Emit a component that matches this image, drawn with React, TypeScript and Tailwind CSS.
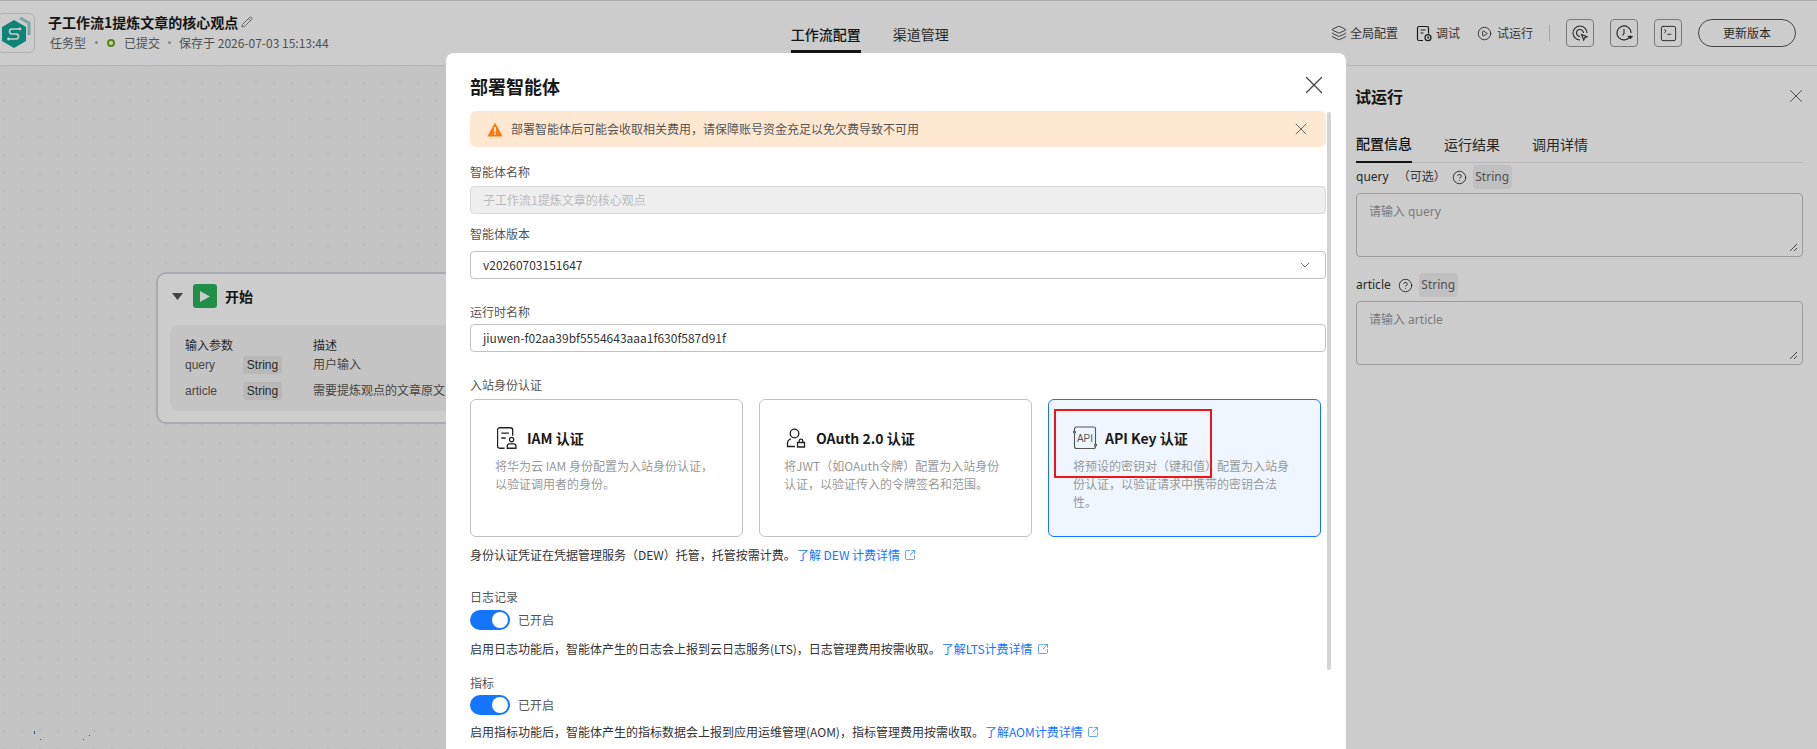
import { CirclePlay, CircleHelp, Layers, Pencil, SquareArrowOutUpRight, SquareTerminal, X, ChevronDown } from 'lucide-react';

const fontStack = 'font-["Noto_Sans_CJK_SC","Noto_Sans",sans-serif]';

function Logo() {
  return (
    <svg width="30" height="32" viewBox="0 0 30 32" fill="none">
      <path d="M19 1l9 5v12" stroke="#7fc4c0" strokeWidth="3" opacity="0.8" />
      <path d="M13 3l12 7v14l-12 7-12-7V10z" fill="#12a594" />
      <path d="M18 12h-7a2.5 2.5 0 0 0 0 5h4a2.5 2.5 0 0 1 0 5H8" stroke="#fff" strokeWidth="1.6" />
      <circle cx="19" cy="12" r="1.4" fill="#fff" />
      <circle cx="7.5" cy="22" r="1.4" fill="#fff" />
    </svg>
  );
}

function DebugIcon() {
  return (
    <svg width="16" height="17" viewBox="0 0 16 16" fill="none" stroke="#222" strokeWidth="1.2">
      <path d="M7 15H3a1.5 1.5 0 0 1-1.5-1.5v-11A1.5 1.5 0 0 1 3 1h8a1.5 1.5 0 0 1 1.5 1.5V8" />
      <path d="M4.5 4.5h5M4.5 7.5h3" />
      <circle cx="12" cy="12.2" r="3" />
      <path d="M12 10.7v1.6h1.3" />
    </svg>
  );
}

function TraceIcon() {
  return (
    <svg width="18" height="18" viewBox="0 0 18 18" fill="none" stroke="#333" strokeWidth="1.1">
      <path d="M9 16a7 7 0 1 1 7-7" />
      <path d="M9 12.5A3.5 3.5 0 1 1 12.5 9" />
      <path d="M10.5 10.5l5.5 2.2-2.3 1-1 2.3z" />
    </svg>
  );
}

function HistoryIcon() {
  return (
    <svg width="18" height="18" viewBox="0 0 18 18" fill="none" stroke="#333" strokeWidth="1.1">
      <path d="M15.5 11.5A7 7 0 1 1 16 9" />
      <path d="M9 5v4.5l-1.5 2" />
      <path d="M13.5 12.5h3.5l-1.7 2z" fill="#333" />
    </svg>
  );
}

function IamIcon() {
  return (
    <svg width="20" height="22" viewBox="1 1 18.5 20" fill="none" stroke="#222" strokeWidth="1.2">
      <path d="M8 20.5H3.5A2 2 0 0 1 1.5 18.5V3.5a2 2 0 0 1 2-2h10a2 2 0 0 1 2 2V9" />
      <path d="M5 6.5h7M5 11h4" />
      <circle cx="14.5" cy="12.5" r="2" />
      <path d="M10.5 20.5v-2a2 2 0 0 1 2-2h4a2 2 0 0 1 2 2v2z" />
    </svg>
  );
}

function OauthIcon() {
  return (
    <svg width="20" height="20" viewBox="0 0 20 20" fill="none" stroke="#222" strokeWidth="1.3">
      <circle cx="8.5" cy="5.5" r="4.3" />
      <path d="M9 18.5H1.5V15a4.5 4.5 0 0 1 3.5-4.2M12 10.2" />
      <path d="M11.5 14.5h7v4.5h-7z" />
      <path d="M13.2 14.5V13a1.8 1.8 0 0 1 3.6 0v1.5" />
    </svg>
  );
}

function ApiIcon() {
  return (
    <svg width="24" height="24" viewBox="0 0 24 24" fill="none" stroke="#555" strokeWidth="1.1">
      <path d="M1.5 5V3a2 2 0 0 1 2-2h17a2 2 0 0 1 2 2v15M22.5 20v.5a2 2 0 0 1-2 2h-17a2 2 0 0 1-2-2V7" />
      <circle cx="1.5" cy="6" r="1" />
      <circle cx="22.5" cy="19" r="1" />
      <text x="12" y="15.5" textAnchor="middle" fontSize="10" stroke="none" fill="#555" fontFamily="Liberation Sans">API</text>
    </svg>
  );
}

function InputParamRow({ name, desc, mt }: { name: string; desc: string; mt: string }) {
  return (
    <div className={`flex items-center ${mt}`}>
      <span className="w-[58px] text-[#555]">{name}</span>
      <span className="inline-flex h-[18px] w-[39px] items-center justify-center rounded-[3px] bg-[#e7e7e7] text-[#333]">String</span>
      <span className="ml-[31px] whitespace-nowrap text-[#555]">{desc}</span>
    </div>
  );
}

function TrialField({ label, placeholder, mt, optional }: { label: string; placeholder: string; mt: string; optional?: boolean }) {
  return (
    <div className={`${mt} font-["Noto_Sans","Noto_Sans_CJK_SC",sans-serif]`}>
      <div className="flex items-center h-6 text-[12px] text-[#333]">
        <span>{label}</span>
        {optional && <span className="ml-[9px] text-[#444]">（可选）</span>}
        <CircleHelp size={15} strokeWidth={1.3} className={optional ? 'ml-[6px] text-[#222]' : 'ml-[7px] text-[#222]'} />
        <span className="ml-[6px] inline-flex h-6 w-[39px] items-center justify-center rounded-[4px] bg-[#f0f0f0] text-[#666]">String</span>
      </div>
      <div className="relative mt-[4px] h-16 rounded-[4px] border border-[#c2c2c2] px-3 py-[8px] text-[12px] leading-[20px] text-[#999]">
        {placeholder}
        <svg className="absolute right-[4px] bottom-[4px]" width="9" height="9" viewBox="0 0 9 9" stroke="#555" strokeWidth="1">
          <path d="M1 8l7-7M5 8l3-3" />
        </svg>
      </div>
    </div>
  );
}

function AuthCard({ icon, title, desc, selected }: { icon: React.ReactNode; title: string; desc: string; selected?: boolean }) {
  return (
    <div className={`h-[138px] rounded-[6px] border px-6 pt-[26px] ${selected ? 'border-[#1476ff] bg-[#eff6ff]' : 'border-[#c2c2c2] bg-white'}`}>
      <div className="flex items-center h-6 gap-[8px]">
        <span className="flex w-6 items-center justify-center">{icon}</span>
        <span className="text-[14px] font-semibold text-[#191919]">{title}</span>
      </div>
      <p className="mt-[7px] text-[12px] leading-[18px] text-[#999]">{desc}</p>
    </div>
  );
}

function Toggle() {
  return (
    <div className="flex items-center gap-2 h-5">
      <span className="flex h-5 w-10 items-center justify-end rounded-full bg-[#1476ff] px-[2px]">
        <span className="h-4 w-4 rounded-full bg-white" />
      </span>
      <span className="text-[12px] text-[#555]">已开启</span>
    </div>
  );
}

function DocLink({ children }: { children: React.ReactNode }) {
  return (
    <span className="ml-[1px] inline-flex items-center text-[#1476ff]">
      {children}
      <SquareArrowOutUpRight size={12} strokeWidth={1.3} className="ml-[4px]" />
    </span>
  );
}

function DeployDialog() {
  return (
    <div className="relative ml-[446px] mt-[53px] h-[696px] w-[900px] overflow-hidden rounded-t-[8px] bg-white pl-6 pr-5">
      <div className="flex h-[58px] items-center justify-between text-[18px] font-semibold text-[#191919]">
        <span className="mt-[9px]">部署智能体</span>
        <X size={30} strokeWidth={0.95} className="mt-[6px] mr-[-3px] text-[#444]" />
      </div>
      <div className="flex h-9 items-center rounded-[6px] bg-[#ffe8d1] pl-[17px] pr-[15px] text-[12px] text-[#555]">
        <svg width="16" height="15" viewBox="0 0 16 15">
          <path d="M8 .5L15.7 14.5H.3z" fill="#fa7a14" />
          <path d="M7.2 5h1.6v5.2H7.2zM7.2 11h1.6v1.6H7.2z" fill="#fff" />
        </svg>
        <span className="ml-[8px] flex-1">部署智能体后可能会收取相关费用，请保障账号资金充足以免欠费导致不可用</span>
        <X size={20} strokeWidth={1.1} className="text-[#555]" />
      </div>

      <div className="mt-[16px] text-[12px] leading-[18px] text-[#555]">智能体名称</div>
      <div className="mt-[5px] flex h-7 items-center rounded-[4px] border border-[#d9d9d9] bg-[#eeeeee] px-3 text-[12px] text-[#bbb]">子工作流1提炼文章的核心观点</div>

      <div className="mt-[11px] text-[12px] leading-[18px] text-[#555]">智能体版本</div>
      <div className="mt-[8px] flex h-7 items-center justify-between rounded-[4px] border border-[#c2c2c2] px-3 text-[12px] text-[#333]">
        <span>v20260703151647</span>
        <ChevronDown size={16} strokeWidth={1.2} className="text-[#555]" />
      </div>

      <div className="mt-[24px] text-[12px] leading-[18px] text-[#555]">运行时名称</div>
      <div className="mt-[3px] flex h-7 items-center rounded-[4px] border border-[#c2c2c2] px-3 text-[12px] text-[#333]">jiuwen-f02aa39bf5554643aaa1f630f587d91f</div>

      <div className="mt-[24px] text-[12px] leading-[18px] text-[#555]">入站身份认证</div>
      <div className="mt-[5px] grid w-[851px] grid-cols-3 gap-4">
        <AuthCard icon={<IamIcon />} title="IAM 认证" desc="将华为云 IAM 身份配置为入站身份认证，以验证调用者的身份。" />
        <AuthCard icon={<OauthIcon />} title="OAuth 2.0 认证" desc="将JWT（如OAuth令牌）配置为入站身份认证，以验证传入的令牌签名和范围。" />
        <AuthCard selected icon={<ApiIcon />} title="API Key 认证" desc="将预设的密钥对（键和值）配置为入站身份认证，以验证请求中携带的密钥合法性。" />
      </div>
      <div className="mt-[9px] text-[12px] leading-[18px] text-[#333]">
        身份认证凭证在凭据管理服务（DEW）托管，托管按需计费。<DocLink>了解 DEW 计费详情</DocLink>
      </div>

      <div className="mt-[24px] text-[12px] leading-[18px] text-[#555]">日志记录</div>
      <div className="mt-[4px]"><Toggle /></div>
      <div className="mt-[10px] text-[12px] leading-[18px] text-[#333]">
        启用日志功能后，智能体产生的日志会上报到云日志服务(LTS)，日志管理费用按需收取。<DocLink>了解LTS计费详情</DocLink>
      </div>

      <div className="mt-[16px] text-[12px] leading-[18px] text-[#555]">指标</div>
      <div className="mt-[3px]"><Toggle /></div>
      <div className="mt-[8px] text-[12px] leading-[18px] text-[#333]">
        启用指标功能后，智能体产生的指标数据会上报到应用运维管理(AOM)，指标管理费用按需收取。<DocLink>了解AOM计费详情</DocLink>
      </div>

      {/* scrollbar */}
      <div className="absolute left-[881px] top-[59px] h-[558px] w-1 rounded-full bg-[#d4d4d4]" />
      {/* red annotation box from the screenshot */}
      <div className="absolute left-[608px] top-[356px] h-[69px] w-[158px] border-2 border-[#f01414]" />
    </div>
  );
}

export default function App() {
  return (
    <div className={`relative flex h-[749px] w-[1817px] flex-col overflow-hidden bg-white ${fontStack}`}>
      {/* top bar */}
      <header className="relative flex h-[66px] shrink-0 items-center border-t border-b border-t-[#d4d4d4] border-b-[#e4e4e4] bg-white">
        <div className="ml-[-3px] flex h-[40px] w-[38px] items-center justify-center rounded-[6px] border border-[#dfdfdf]">
          <Logo />
        </div>
        <div className="mb-[3px] ml-[13px] flex flex-col">
          <div className="flex items-center text-[14px] font-semibold leading-[20px] text-[#191919]">
            子工作流1提炼文章的核心观点
            <Pencil size={12} strokeWidth={1.3} className="ml-[3px] text-[#444]" />
          </div>
          <div className="mt-[2px] flex items-center text-[12px] leading-[18px] text-[#666]">
            <span className="ml-[2px]">任务型</span>
            <span className="ml-[9px] h-[3px] w-[3px] rounded-full bg-[#aaa]" />
            <span className="ml-[9px] h-[8px] w-[8px] rounded-full border-2 border-[#6aa80c]" />
            <span className="ml-[9px]">已提交</span>
            <span className="ml-[8px] h-[3px] w-[3px] rounded-full bg-[#aaa]" />
            <span className="ml-[8px]">保存于 2026-07-03 15:13:44</span>
          </div>
        </div>

        <nav className="ml-[462px] flex h-[52px] gap-8 self-start text-[14px] text-[#333]">
          <span className="flex h-full items-center border-b-[3px] border-[#191919] pt-[17px] font-medium text-[#191919]">工作流配置</span>
          <span className="flex h-full items-center pt-[14px]">渠道管理</span>
        </nav>

        <div className="ml-auto mr-[21px] flex items-center text-[12px] text-[#444]">
          <Layers size={16} strokeWidth={1.2} className="text-[#222]" />
          <span className="ml-[3px]">全局配置</span>
          <span className="ml-[18px]"><DebugIcon /></span>
          <span className="ml-[4px]">调试</span>
          <CirclePlay size={15} strokeWidth={1.3} className="ml-[17px] text-[#222]" />
          <span className="ml-[5px]">试运行</span>
          <span className="ml-[16px] h-[16px] w-px bg-[#ccc]" />
          <span className="ml-[16px] flex h-7 w-7 items-center justify-center rounded-[4px] border border-[#999]"><TraceIcon /></span>
          <span className="ml-[16px] flex h-7 w-7 items-center justify-center rounded-[4px] border border-[#999]"><HistoryIcon /></span>
          <span className="ml-[16px] flex h-7 w-7 items-center justify-center rounded-[4px] border border-[#999]"><SquareTerminal size={19} strokeWidth={1.1} className="text-[#222]" /></span>
          <span className="ml-[16px] flex h-7 w-[98px] items-center justify-center rounded-full border border-[#555] text-[#333]">更新版本</span>
        </div>
      </header>

      <div className="flex min-h-0 flex-1">
        {/* canvas */}
        <main className="relative flex-1 overflow-hidden bg-[#f5f5f5] bg-[radial-gradient(circle,#eceef1_1.5px,transparent_2px)] bg-[size:18px_18px] bg-[position:-5px_8px]">
          <div className="absolute left-[156px] top-[206px] h-[152px] w-[340px] rounded-[10px] border-2 border-[#d5d7df] bg-white px-[12px] pt-[10px]">
            <div className="flex h-6 items-center">
              <svg width="11" height="7" viewBox="0 0 11 7" className="ml-[2px]"><path d="M0 0h11L5.5 7z" fill="#555" /></svg>
              <span className="ml-[10px] flex h-6 w-6 items-center justify-center rounded-[3px] bg-[#2bb35a]">
                <svg width="12" height="13" viewBox="0 0 12 13"><path d="M1 1l10 5.5L1 12z" fill="#fff" /></svg>
              </span>
              <span className="ml-[8px] text-[14px] font-semibold text-[#191919]">开始</span>
            </div>
            <div className='mt-[17px] h-[86px] rounded-[8px] bg-[#f5f5f5] px-[15px] pt-[12px] font-["Liberation_Sans","Noto_Sans_CJK_SC",sans-serif] text-[12px] leading-[18px]'>
              <div className="flex text-[#333]">
                <span className="w-[128px]">输入参数</span>
                <span>描述</span>
              </div>
              <InputParamRow name="query" desc="用户输入" mt="mt-[1px]" />
              <InputParamRow name="article" desc="需要提炼观点的文章原文" mt="mt-[8px]" />
            </div>
          </div>
          {/* stray selection specks */}
          <span className="absolute left-[34px] top-[665px] h-[3px] w-[1px] bg-[#2a6fd6]" />
          <span className="absolute left-[40px] top-[673px] h-[1px] w-[1px] bg-[#2a6fd6]" />
          <span className="absolute left-[83px] top-[673px] h-[1px] w-[1px] bg-[#2a6fd6]" />
          <span className="absolute left-[89px] top-[669px] h-[1px] w-[1px] bg-[#2a6fd6]" />
        </main>

        {/* trial run panel */}
        <aside className="w-[480px] shrink-0 bg-white pl-[19px] pr-[14px]">
          <div className="flex h-[60px] items-center justify-between">
            <span className="ml-[-1px] text-[16px] font-semibold text-[#191919]">试运行</span>
            <X size={22} strokeWidth={1} className="mr-[-4px] text-[#555]" />
          </div>
          <div className="flex h-[37px] gap-8 border-b border-[#e8e8e8] text-[14px] text-[#333]">
            <span className="flex h-[37px] items-center border-b-2 border-[#191919] font-medium text-[#191919]">配置信息</span>
            <span className="flex h-[36px] items-center">运行结果</span>
            <span className="flex h-[36px] items-center">调用详情</span>
          </div>
          <TrialField label="query" optional placeholder="请输入 query" mt="mt-[2px]" />
          <TrialField label="article" placeholder="请输入 article" mt="mt-[16px]" />
        </aside>
      </div>

      {/* modal mask */}
      <div className="absolute inset-0 flex items-start bg-black/20">
        <DeployDialog />
      </div>
    </div>
  );
}
